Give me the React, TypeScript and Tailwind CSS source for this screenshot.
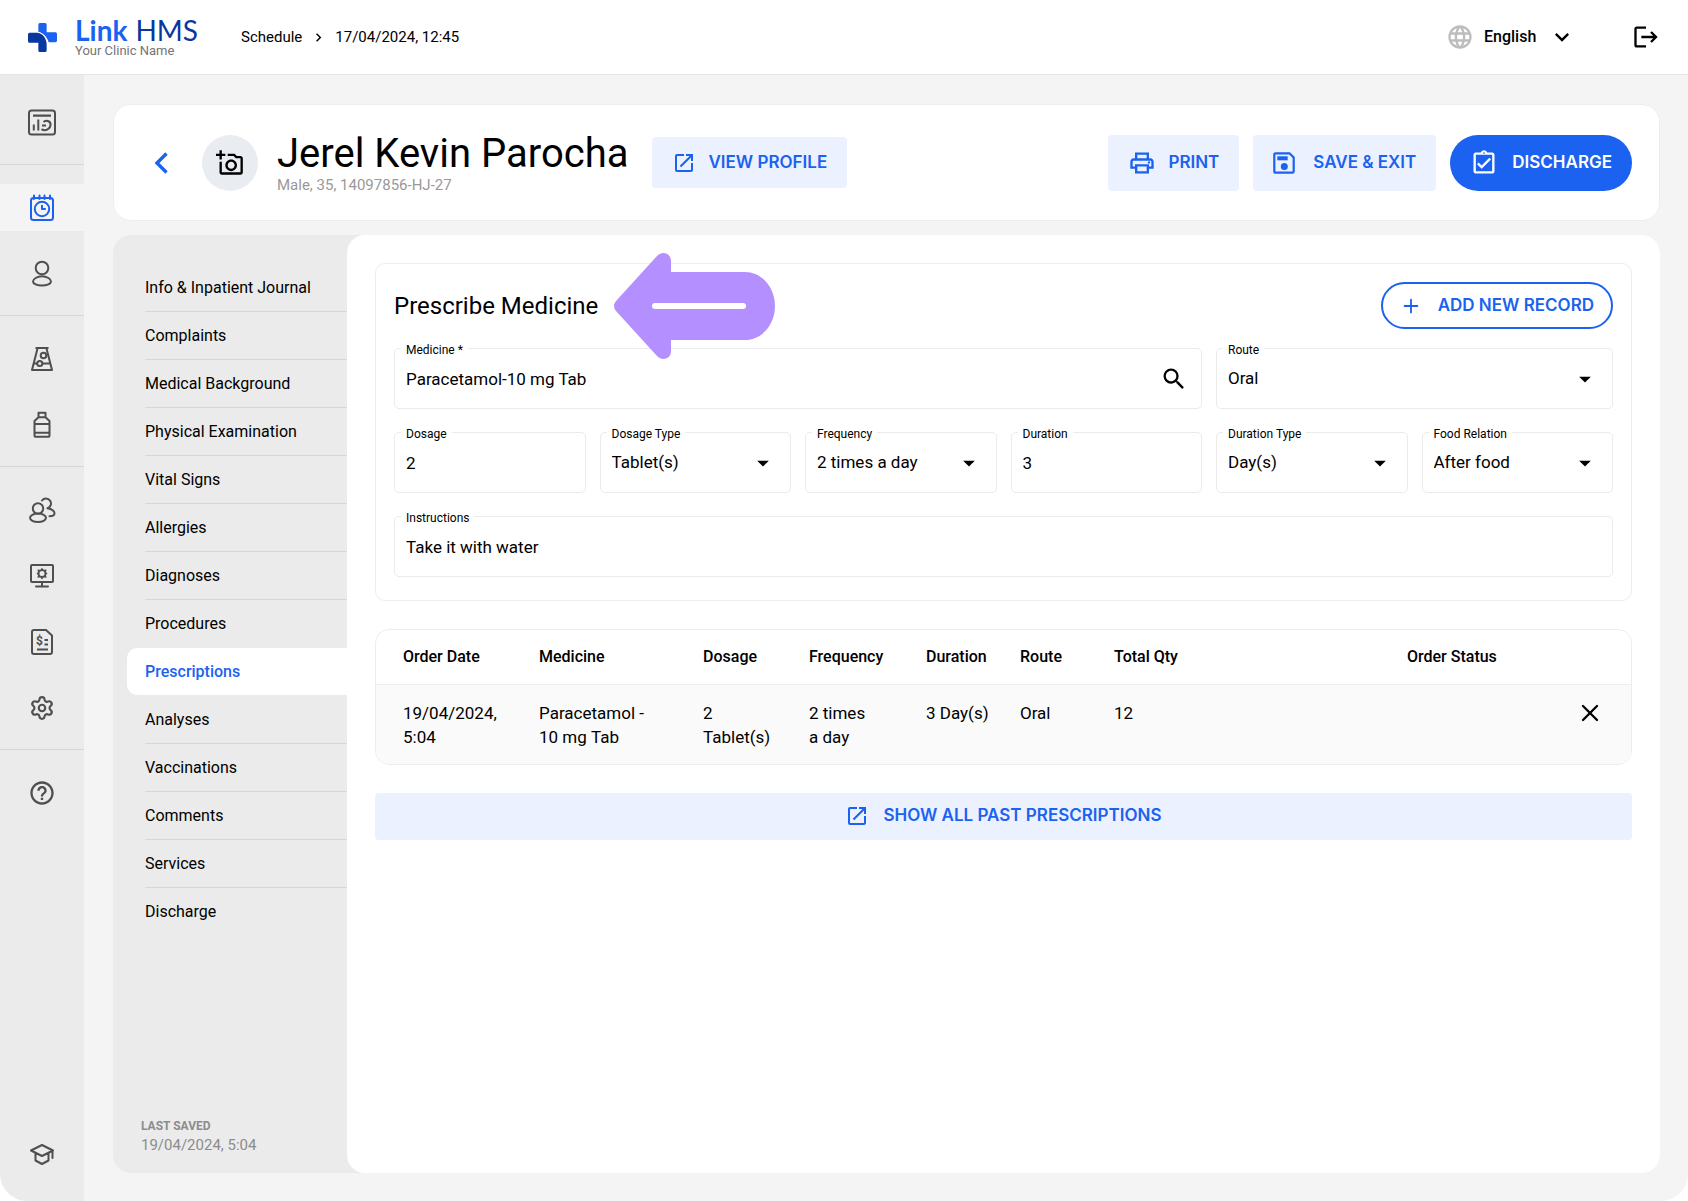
import React, { useState } from 'react';
import clsx from 'clsx';
import { Settings, Plus, X } from 'lucide-react';
import {
  MdArrowDropDown,
  MdLanguage,
  MdLogout,
  MdOpenInNew,
  MdOutlineAddAPhoto,
  MdOutlineAssignmentTurnedIn,
  MdOutlineHelpOutline,
  MdOutlineKeyboardArrowDown,
  MdOutlineKeyboardArrowRight,
  MdOutlinePrint,
  MdSearch,
} from 'react-icons/md';

function Glyph({ children }: { children: React.ReactNode }) {
  return (
    <svg width="28" height="28" viewBox="0 0 28 28" fill="none" stroke="currentColor" strokeWidth="2" strokeLinecap="round" strokeLinejoin="round" aria-hidden="true">
      {children}
    </svg>
  );
}

const DashboardIcon = () => (
  <Glyph>
    <rect x="1" y="1.500" width="26" height="24" rx="2.5" />
    <path d="M5 6.600h18" strokeWidth="2.400" strokeLinecap="butt" />
    <path d="M5.800 15.500v6M10.300 10.500v11M15.500 13c3.500-2.500 7.500-.5 7 3.200-.5 4.300-5.500 6.300-9 4M14 16.500h4" strokeLinecap="butt" />
  </Glyph>
);

const ScheduleIcon = () => (
  <Glyph>
    <rect x="3" y="4" width="22" height="22" rx="2.500" />
    <path d="M6 1.500V5M11.500 1.500V5M16.500 1.500V5M22 1.500V5" />
    <circle cx="14" cy="15" r="7.200" />
    <path d="M14 11.800V15h3" />
  </Glyph>
);

const PatientIcon = () => (
  <Glyph>
    <circle cx="14" cy="8" r="6.300" />
    <path d="M14 16.300c5 0 9 2.800 9 5.200 0 2.200-4 4-9 4s-9-1.800-9-4c0-2.400 4-5.200 9-5.200Z" />
  </Glyph>
);

const LabIcon = () => (
  <Glyph>
    <path d="M7.500 3h13M9.500 3.500 4 25h20L18.500 3.500" strokeLinecap="butt" />
    <circle cx="15.500" cy="10.500" r="2.800" />
    <circle cx="11.800" cy="18.500" r="2.600" />
    <path d="M6 18.500h3M14.500 18.500h7.500" />
  </Glyph>
);

const PharmacyIcon = () => (
  <Glyph>
    <path d="M10.500 1.800h7v4.500h-7zM10.500 6.300 6.500 10v14.200q0 1.600 1.600 1.600h11.800q1.600 0 1.600-1.600V10l-4-3.700M6.500 13h15M6.500 21.800h15" />
  </Glyph>
);

const StaffIcon = () => (
  <Glyph>
    <circle cx="10" cy="12.500" r="5.200" />
    <ellipse cx="10" cy="21.800" rx="8" ry="4.200" />
    <path d="M14 4.500a5 5 0 1 1 5.500 7.800M19.500 12.300c4 .8 7 3 7 5.200 0 1.500-1.800 2.600-5 2.800" />
  </Glyph>
);

const WorkstationIcon = () => (
  <Glyph>
    <rect x="3" y="3" width="22" height="17" rx="1" />
    <path d="M14 20v4M8 24.500h12" />
    <path d="m14 5.800 1.600 2 3-.300-.600 2.600 1.500 1.500-1.500 1.500.600 2.600-3-.300-1.600 2-1.600-2-3 .300.600-2.600-1.500-1.500 1.500-1.500-.600-2.600 3 .300Z" fill="currentColor" stroke="none" />
    <circle cx="14" cy="11.600" r="2.500" fill="#ebebeb" stroke="none" />
  </Glyph>
);

const BillingIcon = () => (
  <Glyph>
    <path d="M6 2h12l6 5.500V24q0 2-2 2H6q-2 0-2-2V4q0-2 2-2Z" />
    <text x="8" y="17" fontSize="12" fontWeight="700" fontFamily="Roboto, sans-serif" fill="currentColor" stroke="none">$</text>
    <path d="M16.500 12h3.500M16.500 16.500h3.500M9 21.500h11" strokeLinecap="butt" />
  </Glyph>
);

const AcademyIcon = () => (
  <Glyph>
    <path d="M14 5 3 10.500 14 16l11-5.500ZM7.500 13v7.500L14 24l6.500-3.500V13M24.500 11v7" />
  </Glyph>
);

const SaveIcon = () => (
  <svg width="22" height="22" viewBox="0 0 22 22" fill="none" stroke="currentColor" strokeWidth="2.200" aria-hidden="true">
    <path d="M2.600 1.300h13.900l4.200 4.200v13.900q0 1.300-1.300 1.300H2.600q-1.300 0-1.300-1.300V2.600q0-1.300 1.300-1.300Z" />
    <path d="M4.300 4.300h10.400v4H4.300z" fill="currentColor" stroke="none" />
    <circle cx="11.300" cy="14.500" r="3.500" fill="currentColor" stroke="none" />
  </svg>
);

const sideGroups = [
  [{ label: 'Dashboard', icon: <DashboardIcon /> }],
  [
    { label: 'Schedule', icon: <ScheduleIcon />, active: true },
    { label: 'Patients', icon: <PatientIcon /> },
  ],
  [
    { label: 'Laboratory', icon: <LabIcon /> },
    { label: 'Pharmacy', icon: <PharmacyIcon /> },
  ],
  [
    { label: 'Staff', icon: <StaffIcon /> },
    { label: 'Workstations', icon: <WorkstationIcon /> },
    { label: 'Billing', icon: <BillingIcon /> },
    { label: 'Settings', icon: <Settings size={26} /> },
  ],
  [{ label: 'Help', icon: <MdOutlineHelpOutline size={28} /> }],
];

const sections = [
  'Info & Inpatient Journal',
  'Complaints',
  'Medical Background',
  'Physical Examination',
  'Vital Signs',
  'Allergies',
  'Diagnoses',
  'Procedures',
  'Prescriptions',
  'Analyses',
  'Vaccinations',
  'Comments',
  'Services',
  'Discharge',
];

const orders = [
  {
    date: '19/04/2024, 5:04',
    medicine: 'Paracetamol - 10\u00a0mg\u00a0Tab',
    dosage: '2 Tablet(s)',
    frequency: '2 times a\u00a0day',
    duration: '3 Day(s)',
    route: 'Oral',
    qty: 12,
  },
];

function TopBar() {
  return (
    <header className="flex h-[75px] items-center border-b border-[#e6e6e6] bg-white pl-7 pr-7">
      <a href="#home" className="flex items-center gap-[18px]">
        <svg width="29" height="29" viewBox="0 0 28 28" aria-hidden="true">
          <path d="M10 1.500Q10 0 11.500 0h5Q18 0 18 1.500V9h8.500Q28 9 28 10.500v6.500q0 1.500-1.500 1.500H20C18.500 14 15 9.500 10 8.500Z" fill="#1b62f0" />
          <path d="M1.500 9.500H9c6 .5 9.500 7 9 12.500v4.500q0 1.500-1.500 1.500h-5Q10 28 10 26.500V19H1.500Q0 19 0 17.500V11q0-1.500 1.500-1.500Z" fill="#0a36a0" />
        </svg>
        <span className="flex flex-col">
          <span className="flex gap-2 font-[Lato] text-[28px] leading-[27px]">
            <span className="font-bold text-[#1b62f0]">Link</span>
            <span className="text-[#0a36a0]">HMS</span>
          </span>
          <span className="text-[13px] leading-[14px] text-[#757575]">Your Clinic Name</span>
        </span>
      </a>
      <nav className="ml-[43px] flex items-center gap-2 text-[15px]">
        <a href="#schedule">Schedule</a>
        <MdOutlineKeyboardArrowRight size={17} />
        <span>17/04/2024, 12:45</span>
      </nav>
      <div className="ml-auto flex items-center">
        <MdLanguage size={28} className="text-[#bdbdbd]" />
        <div className="relative ml-[10px] flex items-center">
          <select aria-label="Language" defaultValue="English" className="w-[92px] appearance-none bg-transparent text-base font-medium">
            <option>English</option>
          </select>
          <MdOutlineKeyboardArrowDown size={28} className="pointer-events-none absolute right-0" />
        </div>
        <button type="button" aria-label="Log out" className="ml-14">
          <MdLogout size={28} />
        </button>
      </div>
    </header>
  );
}

function SideBar() {
  return (
    <nav aria-label="Main" className="flex w-[84px] shrink-0 flex-col bg-[#ebebeb] pt-[5px] text-[#4f4f4f]">
      {sideGroups.map((group, i) => (
        <div key={i} className={clsx('flex flex-col gap-[19px] pt-[19px] pb-[18px]', i < sideGroups.length - 1 && 'border-b border-[#d6d6d6]')}>
          {group.map((item) => (
            <a
              key={item.label}
              href="#"
              aria-label={item.label}
              className={clsx('flex h-[47px] items-center justify-center', 'active' in item && item.active && 'bg-[#f4f4f4] text-[#1b62f0]')}
            >
              {item.icon}
            </a>
          ))}
        </div>
      ))}
      <a href="#" aria-label="Academy" className="mt-auto mb-6 flex h-[47px] items-center justify-center">
        <AcademyIcon />
      </a>
    </nav>
  );
}

function PatientHeader() {
  const soft = 'flex items-center rounded bg-[#ebf1ff] px-5 font-[Inter] text-[17px] font-semibold text-[#1b62f0]';
  return (
    <section className="flex items-center rounded-[18px] border border-[#ebeef0] bg-white py-[26px] pl-[34px] pr-[27px]">
      <button type="button" aria-label="Back" className="text-[#1b62f0]">
        <svg width="26" height="24" viewBox="0 0 26 24" fill="none" stroke="currentColor" strokeWidth="3.400" aria-hidden="true">
          <path d="M18.500 2.500 9 12l9.500 9.500" />
        </svg>
      </button>
      <button type="button" aria-label="Add photo" className="ml-7 flex size-14 items-center justify-center rounded-full bg-[#e9edf1]">
        <MdOutlineAddAPhoto size={28} />
      </button>
      <div className="ml-[19px]">
        <h1 className="text-[40px] leading-[45px]">Jerel Kevin Parocha</h1>
        <p className="text-[15px] leading-[18px] text-[#999]">Male, 35, 14097856-HJ-27</p>
      </div>
      <button type="button" className={clsx(soft, 'ml-6 h-[51px] gap-3')}>
        <MdOpenInNew size={24} /> VIEW PROFILE
      </button>
      <div className="ml-auto flex gap-3.5">
        <button type="button" className={clsx(soft, 'h-14 gap-3')}>
          <MdOutlinePrint size={28} /> PRINT
        </button>
        <button type="button" className={clsx(soft, 'h-14 gap-[18px]')}>
          <SaveIcon /> SAVE &amp; EXIT
        </button>
        <button type="button" className="flex h-14 items-center gap-3.5 rounded-full bg-[#1b62f0] px-5 font-[Inter] text-[17px] font-semibold text-white">
          <MdOutlineAssignmentTurnedIn size={28} /> DISCHARGE
        </button>
      </div>
    </section>
  );
}

function SectionNav() {
  return (
    <aside className="flex w-[234px] shrink-0 flex-col pt-[29px]">
      <ul>
        {sections.map((name, i) => {
          const active = name === 'Prescriptions';
          const plain = active || sections[i + 1] === 'Prescriptions' || i === sections.length - 1;
          return (
            <li key={name} className={clsx('h-12', active ? 'pl-3.5' : 'pl-8')}>
              <a
                href="#"
                aria-current={active ? 'page' : undefined}
                className={clsx(
                  'flex items-center',
                  active ? 'h-[47px] rounded-l-[10px] bg-white pl-[18px] font-medium text-[#1b62f0]' : 'h-12',
                  !plain && 'border-b border-[#d6d6d6]'
                )}
              >
                {name}
              </a>
            </li>
          );
        })}
      </ul>
      <div className="mt-auto pb-[18px] pl-7 text-[#8c8c8c]">
        <p className="text-xs leading-[19px] font-bold">LAST SAVED</p>
        <p className="text-[15px] leading-[19px]">19/04/2024, 5:04</p>
      </div>
    </aside>
  );
}

interface FieldProps {
  id: string;
  label: string;
  value: string;
  kind?: 'text' | 'select' | 'search';
  className?: string;
}

function Field({ id, label, value, kind = 'text', className }: FieldProps) {
  const [current, setCurrent] = useState(value);
  const box = 'h-[61px] w-full rounded-[5px] border border-[#ebebeb] bg-transparent px-[11px] text-[17px] outline-none';
  return (
    <div className={clsx('relative flex items-center', className)}>
      {kind === 'select' ? (
        <select id={id} defaultValue={value} className={clsx(box, 'appearance-none')}>
          <option>{value}</option>
        </select>
      ) : (
        <input id={id} value={current} onChange={(e) => setCurrent(e.target.value)} className={box} />
      )}
      <label htmlFor={id} className="absolute -top-1.5 left-[7px] bg-white px-[5px] text-xs leading-4">
        {label}
      </label>
      {kind === 'select' && <MdArrowDropDown size={28} className="pointer-events-none absolute right-3.5" />}
      {kind === 'search' && (
        <button type="button" aria-label="Search medicine" className="absolute right-3.5">
          <MdSearch size={28} />
        </button>
      )}
    </div>
  );
}

function PrescribeForm() {
  return (
    <form className="rounded-[10px] border border-[#ebeeef] px-[18px] pt-[18px] pb-[23px]">
      <div className="flex items-center justify-between">
        <div className="relative">
          <h2 className="text-2xl">Prescribe Medicine</h2>
          <svg width="162" height="106" viewBox="0 0 162 106" className="absolute top-1/2 left-full z-10 ml-4 -translate-y-1/2" aria-hidden="true">
            <path d="M43 3C48-2.500 57 0 57 8V19h74c17 0 30 15.500 30 34s-13 34-30 34H57v11c0 8-9 10.500-14 5L2 58q-4-5 0-10Z" fill="#b38fff" />
            <rect x="38" y="50" width="94" height="6" rx="3" fill="#fff" />
          </svg>
        </div>
        <button type="button" className="flex h-[47px] items-center gap-4 rounded-full border-2 border-[#1b62f0] px-[17px] font-[Inter] text-[17px] font-semibold text-[#1b62f0]">
          <Plus size={22} /> ADD NEW RECORD
        </button>
      </div>
      <div className="mt-[19px] grid grid-cols-6 gap-x-3.5 gap-y-[23px]">
        <Field id="medicine" label="Medicine *" value="Paracetamol-10 mg Tab" kind="search" className="col-span-4" />
        <Field id="route" label="Route" value="Oral" kind="select" className="col-span-2" />
        <Field id="dosage" label="Dosage" value="2" />
        <Field id="dosage-type" label="Dosage Type" value="Tablet(s)" kind="select" />
        <Field id="frequency" label="Frequency" value="2 times a day" kind="select" />
        <Field id="duration" label="Duration" value="3" />
        <Field id="duration-type" label="Duration Type" value="Day(s)" kind="select" />
        <Field id="food" label="Food Relation" value="After food" kind="select" />
        <Field id="instructions" label="Instructions" value="Take it with water" className="col-span-6" />
      </div>
    </form>
  );
}

function OrdersTable() {
  return (
    <div className="overflow-hidden rounded-[14px] border border-[#ebeeef]">
      <table className="w-full table-fixed text-left">
        <thead>
          <tr className="h-[54px] border-b border-[#ebeeef] [&>th]:pl-[27px] [&>th]:font-medium">
            <th className="w-[136px]">Order Date</th>
            <th className="w-[164px]">Medicine</th>
            <th className="w-[106px]">Dosage</th>
            <th className="w-[117px]">Frequency</th>
            <th className="w-[94px]">Duration</th>
            <th className="w-[94px]">Route</th>
            <th>Total Qty</th>
            <th className="w-[169px]">Order Status</th>
            <th className="w-[82px]" aria-label="Actions" />
          </tr>
        </thead>
        <tbody>
          {orders.map((order) => (
            <tr key={order.date} className="bg-[#fafafa] align-top text-[17px] leading-6 [&>td]:pt-4 [&>td]:pb-[15px] [&>td]:pl-[27px]">
              <td>{order.date}</td>
              <td className="pr-2">{order.medicine}</td>
              <td>{order.dosage}</td>
              <td>{order.frequency}</td>
              <td className="whitespace-nowrap">{order.duration}</td>
              <td>{order.route}</td>
              <td>{order.qty}</td>
              <td />
              <td>
                <button type="button" aria-label="Remove order" className="flex h-6 items-center">
                  <X size={28} />
                </button>
              </td>
            </tr>
          ))}
        </tbody>
      </table>
    </div>
  );
}

export default function App() {
  return (
    <div className="flex min-h-screen flex-col overflow-hidden rounded-[27px] bg-white font-[Roboto,sans-serif] text-base text-black">
      <TopBar />
      <div className="flex flex-1">
        <SideBar />
        <main className="flex min-w-0 flex-1 flex-col gap-3.5 bg-[#f4f4f4] px-7 pt-[29px] pb-7 pl-[29px]">
          <PatientHeader />
          <div className="flex flex-1 rounded-[18px] bg-[#ebebeb]">
            <SectionNav />
            <section className="flex min-w-0 flex-1 flex-col gap-7 rounded-[18px] bg-white p-7">
              <PrescribeForm />
              <OrdersTable />
              <button type="button" className="flex h-[47px] items-center justify-center gap-3.5 rounded bg-[#ebf1ff] font-[Inter] text-[17px] font-semibold text-[#1b62f0]">
                <MdOpenInNew size={24} /> SHOW ALL PAST PRESCRIPTIONS
              </button>
            </section>
          </div>
        </main>
      </div>
    </div>
  );
}
